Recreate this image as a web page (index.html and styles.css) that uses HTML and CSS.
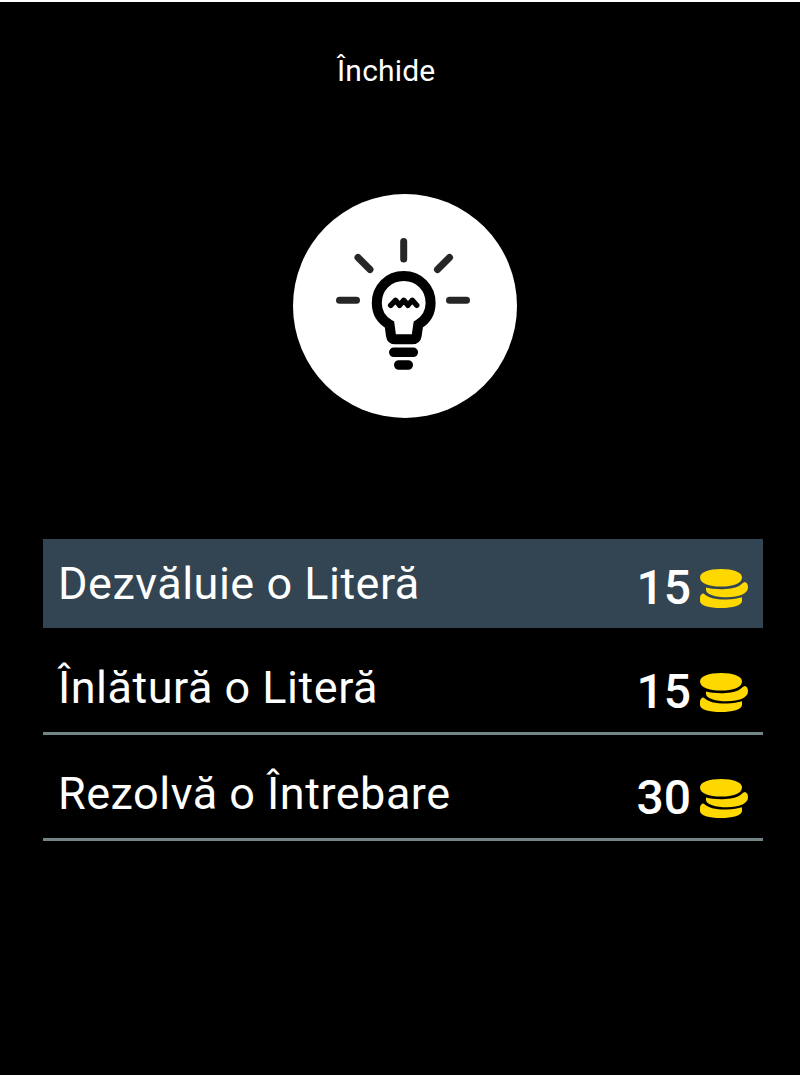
FILE: index.html
```html
<!DOCTYPE html>
<html lang="ro">
<head>
  <meta charset="UTF-8">
  <meta name="viewport" content="width=device-width, initial-scale=1.0">
  <title>Indicii</title>
  <link rel="stylesheet" href="styles.css">
</head>
<body>
  <!-- shared coin stack icon -->
  <svg class="defs" width="0" height="0">
    <symbol id="coins" viewBox="0 0 48 39">
      <path d="M0 8.500C0 3 9 0 21 0C33 0 42 3 42 8.500C42 14.500 33 17.600 21 17.600C9 17.600 0 14.500 0 8.500Z"/>
      <path d="M6 18.500C15 21 31 21 39 17C41.500 15.500 43 13.200 45 13C47 13.500 48 15.500 48 18.500C48 24.500 39 28.300 27 28.300C16 28.300 6 25.500 6 21Z"/>
      <path d="M0 29C0 26.500 1.500 24.500 3.700 24.500C8 29 16 30.800 27 30.600C33 30.400 38 29.500 42 28.300V32C42 36.500 32 39 21 39C9 39 0 36.500 0 32Z"/>
    </symbol>
  </svg>

  <div class="dialog">
    <a class="close">Închide</a>

    <div class="bulb">
      <svg width="224" height="224" viewBox="293 194 224 224">
        <g class="rays">
          <path d="M403.700 241.500V259"/>
          <path d="M358 257.500L370 269.500"/>
          <path d="M449.500 257.500L437.500 269.500"/>
          <path d="M339.500 300.300H356.500"/>
          <path d="M449.500 300.300H466.500"/>
        </g>
        <path class="glass" d="M389.500 324.500C381.500 320 376.800 312.500 376.800 303C376.800 287.500 388.500 276 403.700 276C418.900 276 430.600 287.500 430.600 303C430.600 312.500 425.900 320 418.300 324.500L416.700 335.500Q416 339.300 412 339.300H395.500Q391.500 339.300 391 335.500Z"/>
        <path class="filament" d="M390.700 305.300L395.500 300.300L399.600 305.300L403.800 300.300L407.900 305.300L412.300 300.300L416.700 305.300"/>
        <path class="base" d="M393.800 352.300H413.300M398.800 365H408.200"/>
      </svg>
    </div>

    <div class="options">
      <div class="option active">
        <span class="name">Dezvăluie o Literă</span>
        <span class="price">15</span>
        <svg class="coins"><use href="#coins"/></svg>
      </div>
      <div class="option">
        <span class="name">Înlătură o Literă</span>
        <span class="price">15</span>
        <svg class="coins"><use href="#coins"/></svg>
      </div>
      <div class="option">
        <span class="name">Rezolvă o Întrebare</span>
        <span class="price">30</span>
        <svg class="coins"><use href="#coins"/></svg>
      </div>
    </div>
  </div>
</body>
</html>
```

FILE: styles.css
```css
* { margin: 0; padding: 0; box-sizing: border-box; }
body {
  font-family: Roboto, 'Noto Sans', sans-serif;
  background: #000;
  color: #fff;
}
.defs {
  display: block;
}
.dialog {
  height: 1075px;
  border-top: 2px solid #fff;
  overflow: hidden;
}
.close {
  display: block;
  width: 98px;
  height: 40px;
  margin: 49px 0 0 337px;
  font-size: 30px;
  line-height: 40px;
  letter-spacing: 0.2px;
  white-space: nowrap;
}
.bulb {
  width: 224px;
  height: 224px;
  margin: 103px 0 0 293px;
  background: #fff;
  border-radius: 50%;
}
.bulb svg {
  display: block;
  fill: none;
  stroke: #000;
  stroke-linecap: round;
  stroke-linejoin: round;
}
.rays {
  stroke: #262626;
  stroke-width: 7;
}
.glass {
  stroke-width: 10;
  stroke-linejoin: miter;
}
.filament {
  stroke-width: 5.5;
}
.base {
  stroke-width: 9.6;
}
.options {
  width: 720px;
  margin: 121px 0 0 43px;
}
.option {
  display: flex;
  align-items: flex-start;
  height: 92px;
  margin-bottom: 14px;
  padding: 0 15px;
  border-bottom: 3px solid #738486;
}
.option.active {
  height: 89px;
  margin-bottom: 15px;
  background: #334552;
  border-bottom: none;
}
.name {
  flex: 1;
  font-size: 45px;
  line-height: 90px;
  letter-spacing: 0.5px;
  white-space: nowrap;
}
.price {
  font-size: 48px;
  font-weight: 500;
  line-height: 98px;
  margin-right: 9px;
}
.coins {
  width: 48px;
  height: 39px;
  margin-top: 30px;
  fill: #ffd800;
}
```
